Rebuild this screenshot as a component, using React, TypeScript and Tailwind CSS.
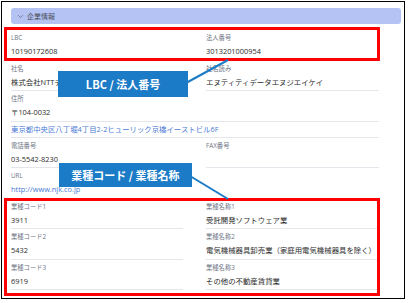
import { ChevronDown } from "lucide-react";

const font = { fontFamily: '"Open Sans", "Noto Sans CJK JP", sans-serif' };

interface FieldProps {
  label: string;
  value?: string;
  link?: boolean;
  className?: string;
}

const Field = ({ label, value, link, className }: FieldProps) => {
  return (
    <div className={`border-b border-[#e4e6eb] pt-[3px] pb-[2.5px] ${className ?? ""}`}>
      <div className="text-[6.3px] leading-[10px] text-[#6e7585] whitespace-nowrap">{label}</div>
      <div
        className={`mt-[2px] text-[7.4px] leading-[12px] whitespace-nowrap ${link ? "text-[#4b7bd6]" : "text-[#2b2b2b]"}`}
      >
        {value || "\u00a0"}
      </div>
    </div>
  );
};

const App = () => {
  return (
    <div className="relative w-[409px] h-[303px] bg-white overflow-hidden" style={font}>
      {/* Page frame */}
      <div className="ml-[1px] mt-[1px] w-[404px] h-[298px] border border-black pl-[9px] pr-[2px] pt-[6px]">
        {/* Section header */}
        <div className="h-[16px] w-[390px] rounded-[3px] bg-[#b4c3f3] flex items-center pl-[5px] gap-[2px] text-[#4a4f5c]">
          <ChevronDown size={9} strokeWidth={1.5} />
          <span className="text-[7px] leading-none">企業情報</span>
        </div>

        <div className="mt-[6px] w-[368px] grid grid-cols-[172px_173px] gap-x-[23px]">
          <Field label="LBC" value="10190172608" />
          <Field label="法人番号" value="3013201000954" />
          <Field label="社名" value="株式会社NTTデータ" />
          <Field label="社名読み" value="エヌティティデータエヌジエイケイ" />
          <Field label="住所" value="〒104-0032" className="col-span-2" />
          <div className="col-span-2 border-b border-[#e4e6eb] pt-[1px] pb-[2px]">
            <div className="text-[7.4px] leading-[12px] text-[#4b7bd6] whitespace-nowrap">
              東京都中央区八丁堀4丁目2-2ヒューリック京橋イーストビル6F
            </div>
          </div>
          <Field label="電話番号" value="03-5542-8230" />
          <Field label="FAX番号" />
          <Field label="URL" value="http://www.njk.co.jp" link />
          <div />
          <Field label="業種コード1" value="3911" />
          <Field label="業種名称1" value="受託開発ソフトウェア業" />
          <Field label="業種コード2" value="5432" />
          <Field label="業種名称2" value="電気機械器具卸売業（家庭用電気機械器具を除く）" />
          <Field label="業種コード3" value="6919" />
          <Field label="業種名称3" value="その他の不動産賃貸業" />
        </div>
      </div>

      {/* Annotation: red frames */}
      <div className="absolute left-[4px] top-[27px] w-[376px] h-[34px] border-[3px] border-[#ff0000]" />
      <div className="absolute left-[4px] top-[198px] w-[376px] h-[98px] border-[3px] border-[#ff0000]" />

      {/* Annotation: leader lines */}
      <svg className="absolute left-0 top-0" width="409" height="303">
        <line x1="186" y1="83" x2="228" y2="60" stroke="#1b7bc6" strokeWidth="2" />
        <line x1="190" y1="176" x2="228" y2="199" stroke="#1b7bc6" strokeWidth="2" />
      </svg>

      {/* Annotation: callouts */}
      <div className="absolute left-[58px] top-[71px] w-[130px] h-[26px] bg-[#1b7bc6] flex items-center justify-center">
        <span className="text-white font-bold text-[11px] leading-none" style={{ fontFamily: '"Noto Sans CJK JP", sans-serif' }}>
          LBC / 法人番号
        </span>
      </div>
      <div className="absolute left-[59px] top-[163px] w-[133px] h-[24px] bg-[#1b7bc6] flex items-center justify-center">
        <span className="text-white font-bold text-[11px] leading-none" style={{ fontFamily: '"Noto Sans CJK JP", sans-serif' }}>
          業種コード / 業種名称
        </span>
      </div>
    </div>
  );
};

export default App;
